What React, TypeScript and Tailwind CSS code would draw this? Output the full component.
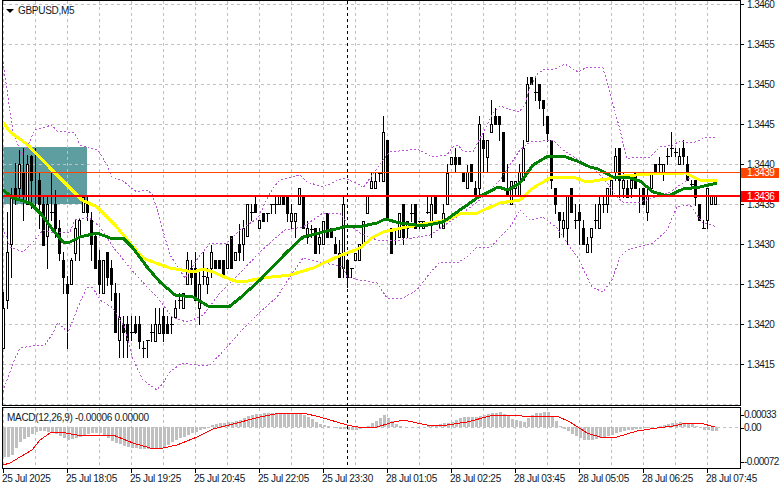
type Pt = [number, number];

// body top, body bottom, wick top, wick bottom, white (1) or black (0)
const candles: number[][] = [
  [308,348,292,348,1],[252,300,212,308,1],[196,244,188,277,1],[188,196,163,204,0],[164,188,148,197,1],
  [172,196,148,220,0],[164,204,155,204,1],[156,180,155,208,0],[172,172,148,208,0],[180,204,172,228,0],
  [204,245,197,245,0],[204,236,196,268,1],[212,212,172,220,0],[204,228,190,237,0],[228,253,220,260,0],
  [260,277,252,293,0],[284,293,276,348,0],[260,284,258,284,1],[228,253,220,260,1],[220,236,218,260,1],
  [197,212,195,212,1],[204,212,197,220,0],[220,244,212,260,0],[236,268,234,268,0],[260,284,250,293,0],
  [260,293,260,293,1],[252,277,252,285,0],[268,284,260,300,0],[293,332,283,332,0],[317,340,293,357,1],
  [324,332,316,357,0],[324,340,316,357,0],[332,332,316,340,0],[324,332,316,333,0],[324,341,316,348,0],
  [348,348,341,357,0],[340,340,340,357,0],[332,332,324,341,0],[324,341,308,341,1],[324,333,308,333,1],
  [316,333,308,341,0],[324,333,316,333,0],[324,324,316,333,0],[308,317,300,317,1],[300,300,293,308,0],
  [293,308,293,308,1],[260,284,252,284,1],[268,277,260,284,0],[268,300,252,300,0],[284,308,270,324,1],
  [276,276,252,284,0],[277,284,268,293,1],[252,268,245,277,1],[260,268,260,268,0],[260,268,260,268,0],
  [260,277,260,277,0],[244,268,244,268,1],[236,268,236,268,0],[252,260,252,260,1],[244,252,224,260,0],
  [228,244,220,260,1],[204,236,204,236,1],[212,212,204,220,0],[204,212,197,212,0],[220,228,220,228,1],
  [213,221,213,221,0],[213,213,213,221,0],[204,204,204,213,0],[204,204,196,213,0],[196,204,196,204,1],
  [196,204,196,204,0],[196,213,196,221,0],[213,221,204,228,1],[213,221,213,237,1],[188,204,188,204,1],
  [196,228,196,228,0],[228,237,221,243,1],[229,229,225,237,0],[228,253,228,253,0],[237,244,228,253,1],
  [221,244,221,244,1],[213,237,213,237,0],[228,237,228,237,0],[244,253,237,253,0],[253,277,240,277,0],
  [204,268,195,277,1],[260,277,260,287,0],[268,268,268,277,0],[253,260,253,260,1],[244,260,244,260,1],
  [221,244,221,244,1],[196,213,196,213,1],[181,188,172,188,1],[181,188,172,188,1],[173,173,173,181,0],
  [132,181,116,181,1],[140,220,140,220,0],[228,253,228,253,0],[228,228,228,244,0],[213,237,213,237,1],
  [204,237,204,244,0],[221,228,221,237,1],[213,213,204,221,0],[204,228,204,228,0],[221,221,221,228,0],
  [221,228,221,228,1],[212,212,196,213,0],[204,221,196,237,1],[196,213,196,213,0],[221,221,221,228,0],
  [213,228,204,228,1],[173,204,164,204,1],[157,164,157,164,1],[157,164,148,172,0],[157,164,157,164,0],
  [172,181,172,181,0],[172,188,165,188,1],[164,181,164,181,0],[188,196,181,196,0],[124,188,116,196,1],
  [140,148,133,172,0],[140,157,140,172,1],[124,132,100,132,1],[116,124,108,124,0],[116,124,116,140,0],
  [132,181,132,181,0],[188,196,164,196,0],[181,204,181,204,1],[181,188,181,196,1],[172,196,164,196,1],
  [148,180,140,180,1],[84,141,77,141,1],[77,84,77,84,0],[92,92,77,100,0],[84,100,84,108,0],
  [100,108,100,125,0],[116,133,116,141,0],[140,180,140,188,0],[188,204,188,213,0],[212,220,212,237,0],
  [220,228,212,237,1],[196,228,196,244,1],[188,212,188,212,0],[220,220,204,228,0],[212,220,204,244,0],
  [228,244,220,244,0],[244,252,237,252,1],[228,237,228,252,1],[220,220,204,228,0],[204,228,196,228,1],
  [204,204,196,212,0],[188,204,188,212,1],[180,196,180,196,1],[156,172,148,180,1],[148,180,148,197,0],
  [180,188,172,197,1],[188,197,180,197,0],[180,188,180,197,1],[172,188,172,188,0],[196,196,188,212,0],
  [188,204,188,204,0],[196,212,188,220,1],[172,188,172,188,1],[164,172,164,172,0],[164,164,157,172,0],
  [164,172,164,180,1],[156,156,148,164,0],[148,148,132,156,0],[152,152,148,156,0],[156,164,148,164,1],
  [148,156,140,164,0],[164,180,156,180,0],[184,184,180,188,0],[180,197,180,205,0],[204,220,204,220,0],
  [228,228,220,228,0],[188,220,188,228,1],[196,204,196,204,1],[196,204,196,204,1],
];

const yellow: Pt[] = [[3,122],[10,132],[28,145],[52,170],[72,190],[82,200],[97,207],[115,225],[130,243],[143,258],[153,262],[170,268],[182,270],[193,272],[203,269],[213,272],[227,278],[238,282],[248,281],[262,278],[290,275],[313,268],[337,257],[360,248],[373,237],[383,232],[407,227],[447,220],[460,214],[477,213],[500,203],[520,200],[533,188],[550,178],[573,177],[587,182],[607,179],[623,176],[650,174],[685,173],[700,180],[717,181]];
const green: Pt[] = [[3,190],[13,198],[30,203],[42,215],[53,230],[63,242],[68,243],[80,237],[97,233],[110,238],[123,238],[133,248],[147,267],[160,282],[175,295],[193,297],[208,306],[230,306],[240,298],[260,280],[287,252],[303,237],[323,232],[340,228],[347,226],[363,226],[377,223],[385,219],[400,223],[423,226],[443,222],[460,210],[477,198],[498,187],[508,190],[520,183],[533,165],[548,156],[563,156],[577,161],[590,167],[598,169],[613,177],[630,178],[640,181],[653,192],[668,196],[683,189],[700,187],[717,183]];
const bandTop: Pt[] = [[3,62],[8,97],[13,132],[22,155],[28,145],[35,130],[45,127],[52,125],[57,131],[75,133],[80,145],[88,147],[98,150],[107,165],[112,177],[123,181],[130,187],[137,192],[147,190],[152,194],[158,212],[165,238],[170,255],[185,278],[198,258],[210,243],[227,243],[240,230],[258,218],[265,203],[273,188],[280,180],[293,177],[300,175],[307,182],[323,187],[343,178],[357,183],[363,188],[383,160],[390,152],[417,149],[433,157],[447,155],[453,147],[458,145],[463,151],[473,152],[487,125],[493,113],[500,106],[519,112],[525,105],[530,87],[538,73],[545,69],[555,69],[565,64],[578,72],[587,67],[603,68],[612,100],[620,130],[627,159],[637,157],[650,157],[660,147],[673,145],[680,141],[693,143],[707,137],[717,138]];
const bandMid: Pt[] = [[3,228],[10,247],[23,252],[33,242],[43,230],[53,233],[70,232],[75,220],[88,217],[100,227],[113,247],[130,268],[147,287],[158,298],[173,318],[187,322],[197,318],[203,315],[220,293],[240,273],[259,253],[273,240],[285,230],[303,227],[323,213],[340,213],[347,223],[360,233],[377,240],[400,240],[430,235],[460,215],[480,200],[500,180],[520,150],[530,142],[553,140],[563,150],[582,162],[593,168],[605,180],[617,197],[623,202],[637,203],[653,198],[670,192],[690,178]];
const bandLow: Pt[] = [[3,392],[13,363],[20,348],[33,346],[45,345],[53,333],[58,322],[68,333],[78,307],[87,287],[93,288],[100,300],[113,308],[125,328],[132,357],[143,380],[157,390],[163,383],[170,372],[182,363],[197,365],[210,365],[227,347],[240,332],[259,313],[277,297],[290,277],[303,258],[320,262],[343,267],[347,277],[360,280],[377,283],[387,298],[403,298],[417,290],[430,273],[440,262],[457,263],[467,257],[477,247],[490,248],[500,237],[510,227],[520,210],[530,220],[543,217],[557,228],[570,247],[578,258],[592,287],[603,292],[612,280],[620,257],[627,250],[653,243],[667,230],[677,207],[690,205],[702,222],[717,227]];
const histogram: Pt[] = [[3,457],[10,457],[13,452],[18,443],[25,438],[32,433],[40,431],[50,432],[67,440],[77,438],[90,433],[100,433],[113,442],[127,447],[140,449],[150,449],[163,447],[177,439],[187,435],[197,431],[207,427],[217,423],[233,422],[250,415],[267,413],[283,413],[300,413],[310,418],[320,425],[333,427],[340,429],[353,430],[363,428],[373,422],[383,415],[390,420],[400,427],[423,427],[450,422],[460,417],[477,417],[490,413],[500,412],[513,420],[523,422],[533,413],[547,412],[557,423],[560,427],[570,433],[583,440],[593,440],[610,435],[623,431],[643,428],[657,427],[667,424],[680,422],[690,424],[703,430],[717,431]];
const signal: Pt[] = [[3,465],[10,463],[20,457],[32,450],[40,440],[50,433],[60,432],[77,435],[93,436],[113,435],[133,443],[150,448],[163,448],[177,445],[197,437],[213,429],[233,424],[260,417],[280,413],[303,413],[320,417],[347,425],[363,428],[377,427],[390,423],[403,420],[427,425],[447,425],[467,422],[490,416],[517,415],[527,417],[557,416],[570,422],[587,433],[603,438],[617,437],[637,431],[657,428],[673,426],[687,423],[700,423],[715,427]];

const prices = ["1.3460","1.3455","1.3450","1.3445","1.3440","1.3435","1.3430","1.3425","1.3420","1.3415"];
const times = ["25 Jul 2025","25 Jul 18:05","25 Jul 19:25","25 Jul 20:45","25 Jul 22:05","25 Jul 23:30","28 Jul 01:05","28 Jul 02:25","28 Jul 03:45","28 Jul 05:05","28 Jul 06:25","28 Jul 07:45"];
const gridX = Array.from({ length: 23 }, (_, i) => 3.5 + i * 32);
const gridY = Array.from({ length: 11 }, (_, i) => 4.5 + i * 40);

const toPoints = (pts: Pt[]) => pts.map(([x, y]) => `${x},${y}`).join(" ");

function valueAt(pts: Pt[], x: number) {
  for (let i = 1; i < pts.length; i++) {
    if (x <= pts[i][0]) {
      const [x0, y0] = pts[i - 1];
      const [x1, y1] = pts[i];
      return y0 + ((y1 - y0) * (x - x0)) / (x1 - x0);
    }
  }
  return pts[pts.length - 1][1];
}

function PriceChart() {
  return (
    <svg viewBox="3 1 737 404" width={737} height={404} className="block" shapeRendering="crispEdges">
      <rect x={3} y={147} width={84} height={57} fill="#5f9ea0" />
      {gridX.map((x) => (
        <line key={x} x1={x} x2={x} y1={1} y2={405} stroke="#c0c0c0" strokeDasharray="3 3" />
      ))}
      {gridY.map((y) => (
        <line key={y} x1={3} x2={740} y1={y} y2={y} stroke="#c0c0c0" strokeDasharray="3 3" />
      ))}
      <line x1={347.5} x2={347.5} y1={1} y2={405} stroke="#000" strokeDasharray="3 3" />
      {candles.map(([top, bot, wickTop, wickBot, white], k) => {
        const cx = 3.5 + k * 4;
        return (
          <g key={k}>
            <line x1={cx} x2={cx} y1={wickTop} y2={wickBot + 1} stroke="#000" />
            {top === bot ? (
              <line x1={cx - 2} x2={cx + 2} y1={top + 0.5} y2={top + 0.5} stroke="#000" />
            ) : (
              <rect x={cx - 1} y={top + 0.5} width={2} height={bot - top} fill={white ? "#fff" : "#000"} stroke="#000" />
            )}
          </g>
        );
      })}
      {[bandTop, bandMid, bandLow].map((pts, i) => (
        <polyline key={i} points={toPoints(pts)} fill="none" stroke="#ba55d3" strokeDasharray="2 2" />
      ))}
      <polyline points={toPoints(yellow)} fill="none" stroke="#ffff00" strokeWidth={3} />
      <polyline points={toPoints(green)} fill="none" stroke="#008000" strokeWidth={3} />
      <line x1={3} x2={740} y1={172.5} y2={172.5} stroke="#ff4500" />
      <line x1={3} x2={740} y1={196} y2={196} stroke="#ff0000" strokeWidth={2} />
    </svg>
  );
}

function MacdChart() {
  return (
    <svg viewBox="3 408 737 60" width={737} height={60} className="block" shapeRendering="crispEdges">
      {gridX.map((x) => (
        <line key={x} x1={x} x2={x} y1={408} y2={468} stroke="#c0c0c0" strokeDasharray="3 3" />
      ))}
      <line x1={3} x2={740} y1={427.5} y2={427.5} stroke="#c0c0c0" strokeDasharray="3 3" />
      {candles.map((_, k) => {
        const x = 3 + k * 4;
        const end = valueAt(histogram, x);
        return (
          <rect key={k} x={x} y={Math.min(end, 427)} width={3} height={Math.abs(end - 427)} fill="#c0c0c0" />
        );
      })}
      <line x1={347.5} x2={347.5} y1={408} y2={468} stroke="#000" strokeDasharray="3 3" />
      <polyline points={toPoints(signal)} fill="none" stroke="#ff0000" />
    </svg>
  );
}

export default function App() {
  return (
    <div className="w-[781px] h-[489px] overflow-hidden bg-white pl-[2px] text-[10px] leading-[10px] tracking-[-0.3px] text-[#0b1a2a] font-['Liberation_Sans',sans-serif]">
      {/* main chart */}
      <div className="flex h-[406px]">
        <div className="relative w-[739px] border border-black">
          <PriceChart />
          <div className="absolute left-[3px] top-[5px] flex items-center gap-[4px]">
            <span className="w-0 h-0 border-x-[4px] border-x-transparent border-t-[4px] border-t-black" />
            <span>GBPUSD,M5</span>
          </div>
        </div>
        <div className="relative flex-1 tracking-[-0.55px]">
          <div className="flex flex-col">
            {prices.map((p) => (
              <div key={p} className="flex h-10 items-start gap-[3px]">
                <span className="mt-[4px] w-[3px] h-px bg-black" />
                <span className="leading-[9px]">{p}</span>
              </div>
            ))}
          </div>
          <div className="absolute left-0 top-[168px] w-[38px] h-[10px] bg-[#ff4500] text-white pl-[6px]">1.3439</div>
          <div className="absolute left-0 top-[191px] w-[38px] h-[11px] bg-[#ff0000] text-white pl-[6px] leading-[11px]">1.3436</div>
        </div>
      </div>

      {/* macd */}
      <div className="flex h-[62px] mt-px">
        <div className="relative w-[739px] border border-black">
          <MacdChart />
          <div className="absolute left-[4px] top-[5px] whitespace-nowrap">MACD(12,26,9) -0.00006 0.00000</div>
        </div>
        <div className="flex-1 flex flex-col tracking-[-0.6px]">
          <div className="flex items-center mt-[3px]">
            <span className="w-[3px] h-px bg-black" />
            <span>0.00033</span>
          </div>
          <div className="flex items-center mt-[3px]">
            <span className="w-[3px] h-px bg-black" />
            <span>0.00</span>
          </div>
          <div className="flex items-center mt-[24px]">
            <span className="w-[3px] h-px bg-black" />
            <span>-0.00072</span>
          </div>
        </div>
      </div>

      {/* time axis */}
      <div className="flex pl-px">
        {times.map((t) => (
          <div key={t} className="w-16 shrink-0">
            <div className="w-px h-[4px] bg-black" />
            <div className="whitespace-nowrap -ml-px mt-px">{t}</div>
          </div>
        ))}
      </div>
    </div>
  );
}
